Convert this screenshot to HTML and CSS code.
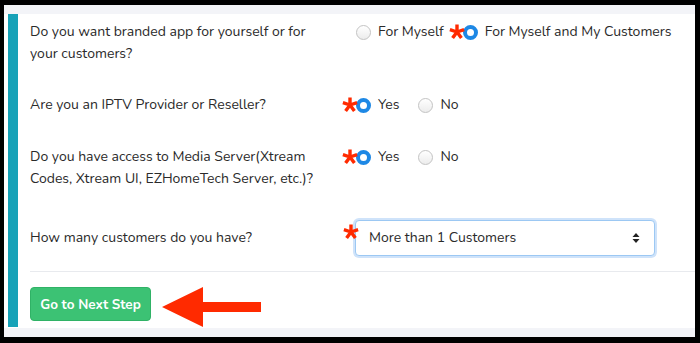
FILE: index.html
```html
<!DOCTYPE html>
<html>
<head>
<meta charset="utf-8">
<link rel="stylesheet" href="styles.css">
</head>
<body>
<div class="page">
  <div class="card">
    <div class="bar"></div>
    <div class="content">
      <div class="row">
        <div class="label">Do you want branded app for yourself or for your customers?</div>
        <div class="control">
          <label class="opt"><span class="radio"></span>For Myself</label>
          <label class="opt"><svg class="star" viewBox="0 0 16 16"><path d="M8 8V0.5M8 8L15.1 5.7M8 8L12.4 14.1M8 8L3.6 14.1M8 8L0.9 5.7"/></svg><span class="radio on"></span>For Myself and My Customers</label>
        </div>
      </div>
      <div class="row">
        <div class="label">Are you an IPTV Provider or Reseller?</div>
        <div class="control">
          <label class="opt"><svg class="star" viewBox="0 0 16 16"><path d="M8 8V0.5M8 8L15.1 5.7M8 8L12.4 14.1M8 8L3.6 14.1M8 8L0.9 5.7"/></svg><span class="radio on"></span>Yes</label>
          <label class="opt"><span class="radio"></span>No</label>
        </div>
      </div>
      <div class="row">
        <div class="label">Do you have access to Media Server(Xtream Codes, Xtream UI, EZHomeTech Server, etc.)?</div>
        <div class="control">
          <label class="opt"><svg class="star" viewBox="0 0 16 16"><path d="M8 8V0.5M8 8L15.1 5.7M8 8L12.4 14.1M8 8L3.6 14.1M8 8L0.9 5.7"/></svg><span class="radio on"></span>Yes</label>
          <label class="opt"><span class="radio"></span>No</label>
        </div>
      </div>
      <div class="row row-select">
        <div class="label">How many customers do you have?</div>
        <div class="control">
          <svg class="star star-select" viewBox="0 0 16 16"><path d="M8 8V0.5M8 8L15.1 5.7M8 8L12.4 14.1M8 8L3.6 14.1M8 8L0.9 5.7"/></svg>
          <div class="select">
            <span>More than 1 Customers</span>
            <svg class="caret" width="8" height="12" viewBox="0 0 8 12"><path d="M4 1 L7.5 5 H0.5 Z M4 11 L7.5 7 H0.5 Z" fill="#222"/></svg>
          </div>
        </div>
      </div>
      <div class="divider"></div>
      <div class="footer">
        <button class="btn">Go to Next Step</button>
        <svg class="arrow" width="100" height="40" viewBox="0 0 100 40"><polygon points="0,20 41,0 41,15 99,15 99,25 41,25 41,40" fill="#ff2a00"/></svg>
      </div>
    </div>
  </div>
</div>
</body>
</html>
```
FILE: styles.css
```css
* { box-sizing: border-box; }
html, body { margin: 0; padding: 0; }
body {
  background: #000;
  width: 700px;
  height: 343px;
  overflow: hidden;
  font-family: "Nunito", "Lato", "Noto Sans", sans-serif;
  font-size: 14px;
  color: #2a2a2a;
}
.page {
  margin: 5px 5px 6px 4px;
  height: 332px;
  background: #f3f4f8;
  padding-top: 9px;
}
.card {
  display: flex;
  height: 314px;
  background: #fff;
  padding-left: 4px;
}
.bar {
  width: 10px;
  background: #17a2b8;
  margin-bottom: 1px;
}
.content {
  flex: 1;
  padding-top: 7px;
  padding-left: 12px;
}
.row {
  display: grid;
  grid-template-columns: 326px 1fr;
  align-items: start;
  margin-bottom: 30px;
  line-height: 22px;
}
.row:first-child { margin-bottom: 29px; }
.row-select { align-items: center; margin-bottom: 15px; }
.label { width: 302px; }
.control {
  display: flex;
  align-items: center;
  height: 22px;
}
.row-select .control { height: 36px; position: relative; }
.opt {
  display: flex;
  align-items: center;
  gap: 7px;
  margin-right: 19px;
  position: relative;
}
.radio {
  width: 15px;
  height: 15px;
  border-radius: 50%;
  border: 1px solid #c3c3c3;
  background: linear-gradient(#ffffff, #ececec);
  flex: none;
}
.radio.on {
  border: 4.5px solid #1e88e5;
  background: #fff;
}
.star {
  position: absolute;
  left: -14px;
  top: 3px;
  width: 16px;
  height: 16px;
  fill: none;
  stroke: #ff2a00;
  stroke-width: 3.4;
}
.star-select { left: -13px; top: 4px; }
.select {
  width: 300px;
  height: 36px;
  border: 1px solid #9cc8f3;
  border-radius: 4px;
  box-shadow: 0 0 0 2px #cfe3fa;
  display: flex;
  align-items: center;
  justify-content: space-between;
  padding: 0 14px 0 13px;
  background: #fff;
  margin-left: -1px;
}
.divider {
  height: 1px;
  background: #e8eaee;
}
.footer {
  display: flex;
  align-items: flex-start;
  gap: 11px;
  padding-top: 15px;
}
.btn {
  width: 121px;
  height: 34px;
  background: #3cc274;
  border: 1px solid #30b266;
  border-radius: 4px;
  color: #fff;
  font-family: inherit;
  font-size: 13.5px;
  font-weight: 700;
  padding: 0;
}
.arrow { display: block; }
```
